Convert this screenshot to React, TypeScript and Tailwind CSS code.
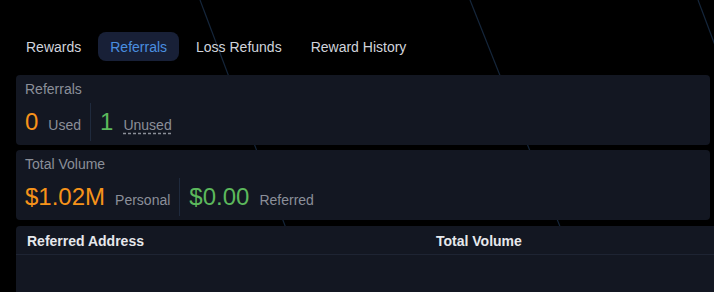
// Rewards panel, "Referrals" tab: referral counts, volume summary and an
// (empty) referred-address table, over a faint diagonal line backdrop.
import { useState } from "react";

const tabs = ["Rewards", "Referrals", "Loss Refunds", "Reward History"];

const cardClass = "mr-1 rounded bg-[#131722] pl-[9px] pt-1 pb-1";

/** One "value + caption" cell in a stat row; non-first cells get a divider. */
function Stat({
  value,
  caption,
  tone,
  first,
  dashed,
}: {
  value: string;
  caption: string;
  tone: "orange" | "green";
  first?: boolean;
  dashed?: boolean;
}) {
  return (
    <div
      className={[
        "flex h-full items-center pr-[9px]",
        first ? "" : "border-l border-[#1f2a3d] pl-[9px]",
      ].join(" ")}
    >
      <span className="flex items-baseline">
        <span
          className={[
            "text-[24px] leading-7",
            tone === "orange" ? "text-[#f7931a]" : "text-[#5cb85c]",
          ].join(" ")}
        >
          {value}
        </span>
        <span
          className={[
            "ml-2.5 text-sm text-[#8b8f99]",
            dashed ? "underline decoration-dashed decoration-[#8b8f99] underline-offset-[3px]" : "",
          ].join(" ")}
        >
          {caption}
        </span>
      </span>
    </div>
  );
}

export default function App() {
  const [active, setActive] = useState("Referrals");

  return (
    <div
      className="relative h-[292px] w-[714px] overflow-hidden bg-black"
      style={{ fontFamily: '"Liberation Sans", Arial, sans-serif' }}
    >
      {/* Backdrop lines */}
      <svg className="absolute inset-0" width="714" height="292" aria-hidden>
        <g stroke="#15263b" strokeWidth="1.2">
          <line x1="200" y1="0" x2="310" y2="292" />
          <line x1="470" y1="0" x2="586" y2="292" />
          <line x1="698" y1="0" x2="808" y2="292" />
        </g>
      </svg>

      <div className="relative flex flex-col">
        {/* Tabs */}
        <div className="flex gap-[5px] pl-[14px] pt-[32px]">
          {tabs.map((t) => (
            <button
              key={t}
              onClick={() => setActive(t)}
              className={[
                "flex h-[29px] items-center rounded-lg px-3 text-sm",
                t === active ? "bg-[#182037] text-[#4a8fe0]" : "text-[#d1d4dc]",
              ].join(" ")}
            >
              {t}
            </button>
          ))}
        </div>

        <div className="mt-[14px] flex flex-col pl-4">
          {/* Referral counts */}
          <div className={cardClass}>
            <div className="text-sm leading-5 text-[#8b8f99]">Referrals</div>
            <div className="mt-1 flex h-[38px] items-stretch">
              <Stat first value="0" caption="Used" tone="orange" />
              <Stat value="1" caption="Unused" tone="green" dashed />
            </div>
          </div>

          {/* Volume */}
          <div className={`${cardClass} mt-[5px]`}>
            <div className="text-sm leading-5 text-[#8b8f99]">Total Volume</div>
            <div className="mt-1 flex h-[38px] items-stretch">
              <Stat first value="$1.02M" caption="Personal" tone="orange" />
              <Stat value="$0.00" caption="Referred" tone="green" />
            </div>
          </div>

          {/* Referred addresses */}
          <div className="mt-[6px] h-[80px] rounded-tl bg-[#131722]">
            <div className="grid grid-cols-[408px_1fr] border-b border-[#1e2433] text-sm font-bold leading-5 text-[#e6e8ec]">
              <div className="pl-[11px] pt-[5px] pb-[3px]">Referred Address</div>
              <div className="pl-3 pt-[5px] pb-[3px]">Total Volume</div>
            </div>
          </div>
        </div>
      </div>
    </div>
  );
}
